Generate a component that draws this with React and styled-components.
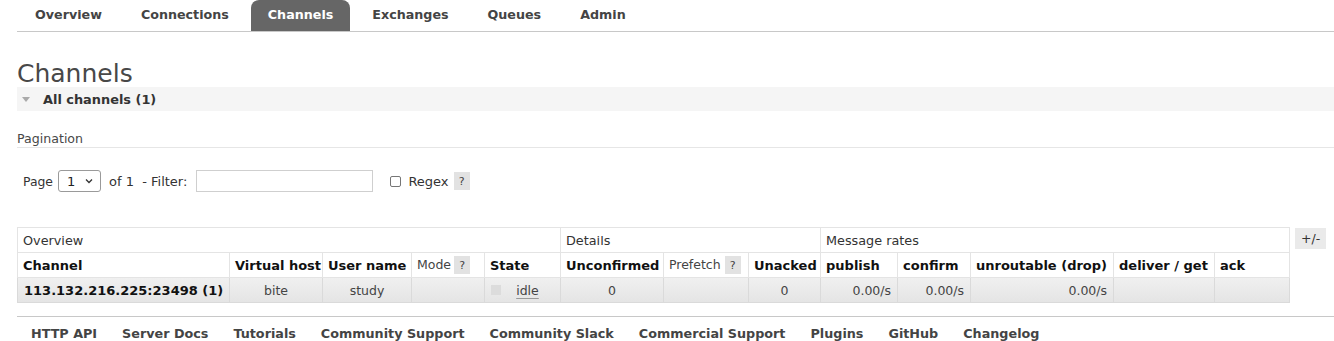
import React from "react";
import styled, { createGlobalStyle } from "styled-components";

const GlobalStyle = createGlobalStyle`
  html, body {
    margin: 0;
    padding: 0;
    background: #fff;
  }
  body {
    font-family: "DejaVu Sans", Verdana, sans-serif;
    font-size: 12px;
    color: #484848;
  }
`;

const Page = styled.div`
  width: 1334px;
  overflow: hidden;
`;

const Tabs = styled.ul`
  display: flex;
  list-style: none;
  margin: 0 0 0 17px;
  padding: 0 0 0 1px;
  height: 31px;
  border-bottom: 1px solid #c8c8c8;
`;

const Tab = styled.li`
  margin-right: 5px;
  padding: 0 17px;
  height: 31px;
  line-height: 29px;
  font-weight: bold;
  font-size: 12.7px;
  border-radius: 8px 8px 0 0;
  color: ${(p) => (p.$active ? "#fff" : "#444")};
  background: ${(p) => (p.$active ? "#666" : "transparent")};
`;

const Main = styled.div`
  padding-left: 17px;
`;

const Title = styled.h1`
  margin: 29px 0 0;
  font-size: 25px;
  line-height: 26px;
  font-weight: normal;
  color: #484848;
`;

const SectionBar = styled.div`
  display: flex;
  align-items: center;
  gap: 13px;
  height: 24px;
  padding-left: 5px;
  background: #f5f5f5;
  font-weight: bold;
  font-size: 12.9px;
  color: #333;
`;

const Triangle = styled.span`
  width: 0;
  height: 0;
  border-left: 4px solid transparent;
  border-right: 4px solid transparent;
  border-top: 5px solid #aaa;
`;

const SubTitle = styled.h3`
  margin: 20px 0 0;
  padding-bottom: 1px;
  font-size: 12.6px;
  font-weight: normal;
  color: #484848;
  border-bottom: 1px solid #e6e6e6;
`;

const FilterRow = styled.div`
  display: flex;
  align-items: center;
  margin: 22px 0 0 6px;
  height: 22px;
  font-size: 13px;
  color: #333;
`;

const PageLabel = styled.span`
  font-size: 12.4px;
`;

const SelectBox = styled.div`
  display: flex;
  align-items: center;
  justify-content: space-between;
  box-sizing: border-box;
  width: 43px;
  height: 22px;
  margin: 0 8px 0 5px;
  padding: 0 6px 0 8px;
  border: 1px solid #9a9a9a;
  border-radius: 3px;
  font-size: 13px;
  color: #222;
`;

const TextInput = styled.div`
  box-sizing: border-box;
  width: 177px;
  height: 22px;
  margin-left: 9px;
  border: 1px solid #cfcfcf;
`;

const Checkbox = styled.span`
  box-sizing: border-box;
  width: 11px;
  height: 11px;
  margin: 0 7px 0 17px;
  border: 1px solid #767676;
  border-radius: 2px;
`;

const Help = styled.span`
  display: inline-flex;
  align-items: center;
  justify-content: center;
  width: 16px;
  height: 18px;
  margin-left: ${(p) => p.$gap || "5px"};
  background: #e2e2e2;
  font-size: 11px;
  font-weight: normal;
  color: #444;
  vertical-align: middle;
`;

const TableRow = styled.div`
  display: flex;
  align-items: flex-start;
  margin-top: 35px;
`;

const Table = styled.table`
  border-collapse: collapse;
  table-layout: fixed;
  width: 1272px;
  font-size: 13px;
  color: #111;
`;

const GroupCell = styled.th`
  height: 24px;
  padding: 0 5px;
  text-align: left;
  font-weight: normal;
  font-size: 12.8px;
  color: #333;
  border: 1px solid #e4e4e4;
`;

const HeadCell = styled.th`
  height: 24px;
  padding: 0 5px;
  text-align: ${(p) => p.$align || "center"};
  font-weight: ${(p) => (p.$light ? "normal" : "bold")};
  font-size: ${(p) => (p.$light ? "12.5px" : "13px")};
  color: ${(p) => (p.$light ? "#444" : "#111")};
  white-space: nowrap;
  border: 1px solid #e4e4e4;
`;

const DataRow = styled.tr`
  background: linear-gradient(#f0f0f0, #e4e4e4);
`;

const Cell = styled.td`
  height: 24px;
  padding: 0 6px;
  text-align: ${(p) => p.$align || "center"};
  font-weight: ${(p) => (p.$bold ? "bold" : "normal")};
  color: ${(p) => (p.$bold ? "#111" : "#444")};
  font-size: ${(p) => (p.$bold ? "13px" : "12.5px")};
  white-space: nowrap;
  border: 1px solid #dadada;
`;

const StateCell = styled.div`
  display: flex;
  align-items: center;
`;

const StateDot = styled.span`
  width: 10px;
  height: 10px;
  background: #dcdcdc;
`;

const Idle = styled.span`
  flex: 1;
  text-align: center;
  text-decoration: underline;
  text-decoration-color: #999;
  text-underline-offset: 3px;
`;

const ToggleButton = styled.span`
  margin: 1px 0 0 5px;
  padding: 0 6px;
  height: 21px;
  line-height: 21px;
  background: #eaeaea;
  font-size: 12.5px;
  color: #333;
`;

const Footer = styled.div`
  display: flex;
  gap: 25px;
  margin-top: 13px;
  padding: 9px 0 0 14px;
  border-top: 1px solid #c8c8c8;
  font-weight: bold;
  font-size: 12.75px;
  color: #444;
`;

const Chevron = () => (
  <svg width="10" height="10" viewBox="0 0 10 10">
    <path d="M2 3.5 L5 6.5 L8 3.5" fill="none" stroke="#333" strokeWidth="1.3" />
  </svg>
);

const tabs = ["Overview", "Connections", "Channels", "Exchanges", "Queues", "Admin"];
const widths = [212, 93, 89, 73, 76, 103, 85, 72, 77, 73, 143, 101, 75];
const footerLinks = [
  "HTTP API",
  "Server Docs",
  "Tutorials",
  "Community Support",
  "Community Slack",
  "Commercial Support",
  "Plugins",
  "GitHub",
  "Changelog",
];

export default function App() {
  return (
    <Page>
      <GlobalStyle />
      <Tabs>
        {tabs.map((t) => (
          <Tab key={t} $active={t === "Channels"}>
            {t}
          </Tab>
        ))}
      </Tabs>
      <Main>
        <Title>Channels</Title>
        <SectionBar>
          <Triangle />
          All channels (1)
        </SectionBar>
        <SubTitle>Pagination</SubTitle>
        <FilterRow>
          <PageLabel>Page</PageLabel>
          <SelectBox>
            1 <Chevron />
          </SelectBox>
          of 1&nbsp;&nbsp;- Filter:
          <TextInput />
          <Checkbox />
          Regex
          <Help>?</Help>
        </FilterRow>
        <TableRow>
          <Table>
            <colgroup>
              {widths.map((w, i) => (
                <col key={i} style={{ width: w }} />
              ))}
            </colgroup>
            <thead>
              <tr>
                <GroupCell colSpan={5}>Overview</GroupCell>
                <GroupCell colSpan={3}>Details</GroupCell>
                <GroupCell colSpan={5}>Message rates</GroupCell>
              </tr>
              <tr>
                <HeadCell $align="left">Channel</HeadCell>
                <HeadCell>Virtual host</HeadCell>
                <HeadCell>User name</HeadCell>
                <HeadCell $light $align="left">
                  Mode<Help $gap="3px">?</Help>
                </HeadCell>
                <HeadCell $align="left">State</HeadCell>
                <HeadCell>Unconfirmed</HeadCell>
                <HeadCell $light $align="left">
                  Prefetch<Help $gap="4px">?</Help>
                </HeadCell>
                <HeadCell>Unacked</HeadCell>
                <HeadCell $align="left">publish</HeadCell>
                <HeadCell $align="left">confirm</HeadCell>
                <HeadCell $align="left">unroutable (drop)</HeadCell>
                <HeadCell $align="left">deliver / get</HeadCell>
                <HeadCell $align="left">ack</HeadCell>
              </tr>
            </thead>
            <tbody>
              <DataRow>
                <Cell $bold $align="left">113.132.216.225:23498 (1)</Cell>
                <Cell>bite</Cell>
                <Cell>study</Cell>
                <Cell />
                <Cell>
                  <StateCell>
                    <StateDot />
                    <Idle>idle</Idle>
                  </StateCell>
                </Cell>
                <Cell>0</Cell>
                <Cell />
                <Cell>0</Cell>
                <Cell $align="right">0.00/s</Cell>
                <Cell $align="right">0.00/s</Cell>
                <Cell $align="right">0.00/s</Cell>
                <Cell />
                <Cell />
              </DataRow>
            </tbody>
          </Table>
          <ToggleButton>+/-</ToggleButton>
        </TableRow>
        <Footer>
          {footerLinks.map((l) => (
            <span key={l}>{l}</span>
          ))}
        </Footer>
      </Main>
    </Page>
  );
}
